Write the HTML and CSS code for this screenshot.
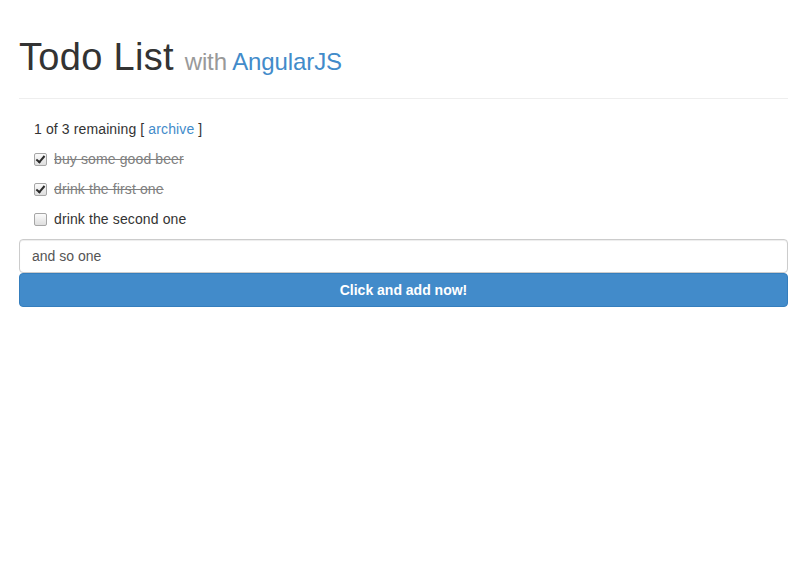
FILE: index.html
```html
<!DOCTYPE html>
<html>
<head>
<meta charset="utf-8">
<title>Todo List</title>
<link rel="stylesheet" href="styles.css">
</head>
<body>
<div class="container">
  <div class="page-header">
    <h1 class="title">Todo List <small class="sub">with <a class="link" href="#">AngularJS</a></small></h1>
  </div>
  <div class="todos">
    <div class="row summary"><span>1 of 3 remaining [ <a class="link" href="#">archive</a> ]</span></div>
    <label class="row item"><input type="checkbox" class="check" checked><span class="done">buy some good beer</span></label>
    <label class="row item"><input type="checkbox" class="check" checked><span class="done">drink the first one</span></label>
    <label class="row item"><input type="checkbox" class="check"><span>drink the second one</span></label>
  </div>
  <form class="add-form">
    <input type="text" class="field" value="and so one">
    <button type="button" class="btn">Click and add now!</button>
  </form>
</div>
</body>
</html>
```
FILE: styles.css
```css
html, body {
  margin: 0;
  padding: 0;
  background: #fff;
}
body {
  font-family: "Liberation Sans", Arial, Helvetica, sans-serif;
  font-size: 14px;
  line-height: 1.428571;
  color: #333;
}
.container {
  padding: 37px 17px 0 19px;
}
.page-header {
  border-bottom: 1px solid #eee;
  padding-bottom: 19px;
  margin-bottom: 16px;
}
.title {
  margin: 0;
  font-size: 38px;
  font-weight: 500;
  line-height: 1.1;
  color: #333;
  letter-spacing: 0.3px;
}
.sub {
  font-size: 24px;
  color: #999;
  font-weight: normal;
  letter-spacing: -0.1px;
  margin-left: 0;
}
.link {
  color: #428bca;
  text-decoration: none;
}
.todos {
  padding-left: 15px;
}
.row {
  display: flex;
  align-items: center;
  height: 30px;
  letter-spacing: 0.12px;
}
.item {
  gap: 7px;
}
.check {
  -webkit-appearance: none;
  appearance: none;
  position: relative;
  box-sizing: border-box;
  margin: 0;
  width: 13px;
  height: 13px;
  border: 1px solid #a6a6a6;
  border-radius: 2px;
  background: linear-gradient(#fbfbfb, #dedede);
}
.check:checked::after {
  content: "";
  position: absolute;
  left: 3px;
  top: 0px;
  width: 3px;
  height: 7px;
  border-right: 2px solid #2b2b2b;
  border-bottom: 2px solid #2b2b2b;
  transform: rotate(40deg);
}
.done {
  text-decoration: line-through;
  color: #808080;
}
.add-form {
  margin-top: 4px;
  display: flex;
  flex-direction: column;
}
.field {
  box-sizing: border-box;
  height: 34px;
  padding: 6px 12px;
  font-family: inherit;
  font-size: 14px;
  color: #555;
  border: 1px solid #ccc;
  border-radius: 4px;
  box-shadow: inset 0 1px 1px rgba(0,0,0,.075);
  outline: none;
}
.btn {
  box-sizing: border-box;
  height: 34px;
  font-family: inherit;
  font-size: 14px;
  font-weight: bold;
  color: #fff;
  background: #428bca;
  border: 1px solid #357ebd;
  border-radius: 4px;
}
```
